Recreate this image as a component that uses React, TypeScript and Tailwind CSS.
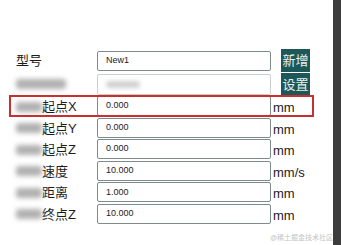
import React from 'react';

const font = { fontFamily: '"Liberation Sans", Arial, "Noto Sans CJK SC", sans-serif' };

// rows after the "设置" row: blurred prefix + visible label, value, unit
const rows = [
  { label: '起点X', value: '0.000', unit: 'mm', mark: true },
  { label: '起点Y', value: '0.000', unit: 'mm' },
  { label: '起点Z', value: '0.000', unit: 'mm' },
  { label: '速度', value: '10.000', unit: 'mm/s' },
  { label: '距离', value: '1.000', unit: 'mm' },
  { label: '终点Z', value: '10.000', unit: 'mm' },
];

function Blob({ w }: { w: string }) {
  return <div className={`h-[10px] ${w} rounded-[3px] bg-[#b0b0b0] blur-[2.5px]`} />;
}

export default function App() {
  return (
    <div className="flex h-[245px] w-full bg-white text-[#1c1c1c]" style={font}>
      <div className="relative flex-1 pt-[48px] pl-[16px]">
        {/* 型号 */}
        <div className="flex h-[24px] items-end">
          <div className="w-[81px] self-center pt-[1px] text-[13px] leading-[15px]">型号</div>
          <div className="mb-[1px] flex h-[20px] w-[174px] items-center rounded-[2px] border border-[#7d8b8b] px-[8px] text-[9px]">
            New1
          </div>
          <button className="ml-[10px] h-[23px] w-[29px] bg-[#1d5858] text-[13px] leading-[23px] text-[#e8f0f0]">
            新增
          </button>
        </div>

        {/* 设置 */}
        <div className="flex h-[24px] items-center">
          <div className="w-[81px]">
            <Blob w="w-[50px]" />
          </div>
          <div className="flex h-[21px] w-[174px] items-center rounded-[2px] border border-[#c9cfcf] px-[8px]">
            <div className="h-[7px] w-[34px] rounded-sm bg-[#d0d0d0] blur-[2px]" />
          </div>
          <button className="ml-[10px] h-[23px] w-[29px] bg-[#1d5858] text-[13px] leading-[23px] text-[#e8f0f0]">
            设置
          </button>
        </div>

        {rows.map((r) => (
          <div key={r.label} className="relative flex h-[21.6px] w-[295px] items-start">
            <div className="flex w-[81px] items-center pt-[3px]">
              <Blob w="w-[26px]" />
              <span className="text-[13px] leading-[15px]">{r.label}</span>
            </div>
            <div className="flex h-[20px] w-[174px] items-center rounded-[2px] border border-[#7d8b8b] px-[8px] text-[9px]">
              {r.value}
            </div>
            <div className="ml-[2px] pt-[4px] text-[13px] leading-[15px]">{r.unit}</div>
            {r.mark && (
              <div className="absolute -top-[1px] -left-[7px] h-[22px] w-[305px] border-2 border-[#c8302f]" />
            )}
          </div>
        ))}

        <div className="absolute right-0 bottom-[2px] text-[7px] text-[#c4c4c4]">@稀土掘金技术社区</div>
      </div>
      <div className="w-[8px] bg-[#3d3d3d]" />
    </div>
  );
}
